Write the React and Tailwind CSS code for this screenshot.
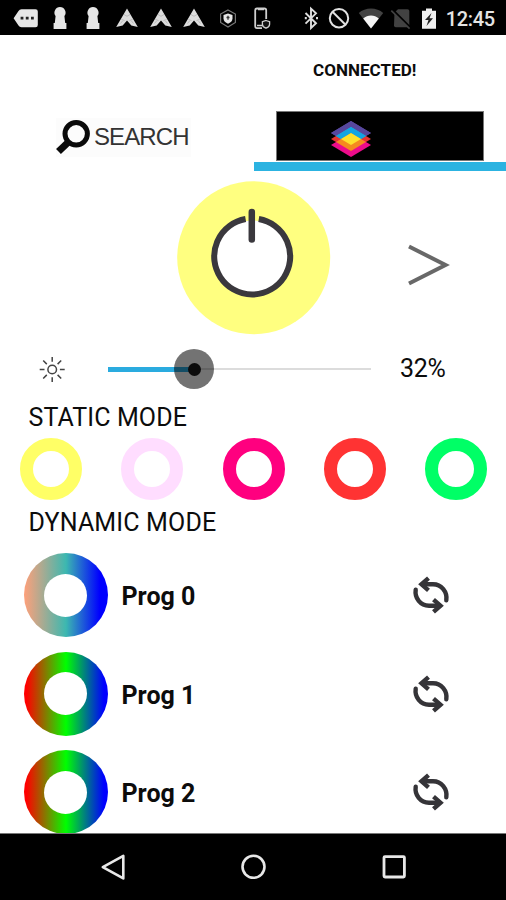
import React, { useState } from 'react';

const staticColors = [
  { id: 'yellow', ring: 'border-[#ffff66]' },
  { id: 'lilac', ring: 'border-[#ffddff]' },
  { id: 'pink', ring: 'border-[#ff007f]' },
  { id: 'red', ring: 'border-[#ff3333]' },
  { id: 'green', ring: 'border-[#00ff66]' },
];

const programs = [
  { name: 'Prog 0', gradient: 'bg-[linear-gradient(to_right,#ffa07a_0%,#3cb8b0_50%,#0000ff_90%)]' },
  { name: 'Prog 1', gradient: 'bg-[linear-gradient(to_right,#ff0000_3%,#00ff00_50%,#0000ff_95%)]' },
  { name: 'Prog 2', gradient: 'bg-[linear-gradient(to_right,#ff0000_3%,#00ff00_50%,#0000ff_95%)]' },
];

const Slot = ({ width, children }) => (
  <div className={`flex shrink-0 justify-center ${width}`}>
    <svg className="h-6 w-6 overflow-visible" viewBox="0 0 24 24" fill="none">
      {children}
    </svg>
  </div>
);

const Keyhole = () => (
  <Slot width="w-[33.6px]">
    <path d="M12 1a5.6 5.6 0 0 0-4.4 9L6.8 17H5.6v6h12.8v-6h-1.2l-.8-7A5.6 5.6 0 0 0 12 1z" fill="#e6e6e6" />
  </Slot>
);

const Tent = () => (
  <Slot width="w-[33.6px]">
    <path d="M12 2.500l10.800 18.500-6.500-1.500-4.300-5-4.300 5-6.500 1.500z" fill="#dcdcdc" />
    <path d="M9 8.500l3 1.800 3-1.800M6.500 13.500l3 1M17.500 13.500l-3 1M5.500 17.500l2-2.500M18.500 17.500l-2-2.500" stroke="#b0b0b0" strokeWidth="0.8" />
  </Slot>
);

const StatusBar = () => (
  <div className="flex h-[35px] shrink-0 items-center bg-black pl-[9.4px]">
    <Slot width="w-[33.6px]">
      <path d="M-.4 12.3L4.5 5q1-1.7 3-1.7H21.500q2.300 0 2.300 2.300v13.300q0 2.300-2.300 2.300H7.500q-2 0-3-1.700z" fill="#e6e6e6" />
      <path d="M6.600 10.800h2.800v2.800H6.600zM11.800 10.800h2.800v2.800h-2.800zM17 10.800h2.800v2.800H17z" fill="#222" />
    </Slot>
    <Keyhole />
    <Keyhole />
    <Tent />
    <Tent />
    <Tent />
    <Slot width="w-[33.6px]">
      <path d="M12 4l7.400 4v8.500L12 21l-7.400-4.500V8z" stroke="#777" strokeWidth="1.200" />
      <path d="M12 7.500l4.500 1.500v3.500c0 2.500-2 4.200-4.500 5.200-2.500-1-4.500-2.700-4.500-5.200V9z" fill="#e6e6e6" />
      <path d="M12 9.800v4M10.500 11.500h3" stroke="#333" strokeWidth="1.300" />
    </Slot>
    <Slot width="w-[33.6px]">
      <path d="M17.200 13V4.300q0-1.800-1.800-1.800H8q-1.800 0-1.800 1.800v16q0 1.800 1.800 1.800h5" stroke="#cfcfcf" strokeWidth="1.800" />
      <path d="M8 19.500h6M9 3.500h6" stroke="#cfcfcf" strokeWidth="1.500" />
      <path d="M17 14.500l3.600 1.200v2.500c0 2-1.600 3.200-3.600 4-2-.8-3.600-2-3.600-4v-2.500z" fill="#111" stroke="#cfcfcf" strokeWidth="1.300" />
    </Slot>
    <div className="w-[20px]" />
    <Slot width="w-[26px]">
      <path d="M6.500 7l10.500 10.300-5 4.700V2.600l5 4.700L6.500 17.700" stroke="#dedede" strokeWidth="1.900" />
      <path d="M5.800 11h2v2.300h-2zM17 11h2v2.300h-2z" fill="#dedede" />
    </Slot>
    <Slot width="w-[29px]">
      <circle cx="12" cy="12.300" r="9.200" stroke="#e2e2e2" strokeWidth="2" />
      <path d="M5.500 5.800l13 13" stroke="#e2e2e2" strokeWidth="2" />
    </Slot>
    <Slot width="w-[35px]">
      <path d="M12 22.500L-.2 7C6 1 18 1 24.200 7z" fill="#424242" />
      <path d="M12 22.500L4.200 12.500c4.300-4 11.300-4 15.600 0z" fill="#f5f5f5" />
    </Slot>
    <Slot width="w-[26px]">
      <path d="M5.500 6.500L9 3.200h9.500q1.800 0 1.800 1.800v16.200H6.800q-1.800 0-1.800-1.800z" fill="#424242" />
      <path d="M3.300 3.600l18 18" stroke="#000" strokeWidth="2.400" />
      <path d="M2.300 4.600l18.300 18" stroke="#424242" strokeWidth="1.600" />
    </Slot>
    <Slot width="w-[30px]">
      <path d="M9 2.500h6v2.200h4v18H5v-18h4z" fill="#f0f0f0" />
      <path d="M14.500 7L8 14h3.500l-2 6 6.500-7.800h-3.500z" fill="#222" />
    </Slot>
    <span className="ml-[1.500px] mt-[3px] text-[20px] leading-6 font-medium tracking-[-0.3px] text-[#e4e4e4]">12:45</span>
  </div>
);

const LayersLogo = () => (
  <svg className="h-[38px] w-[42px]" viewBox="0 0 42 38">
    <path d="M21 1l20 12-20 12L1 13z" fill="#57479d" />
    <path d="M21 7l20 12-20 12L1 19z" fill="#e5342f" />
    <path d="M21 13l20 12-20 12L1 25z" fill="#ec0c8b" />
    <path d="M21 1l20 12-5 3L21 7 6 16l-5-3z" fill="#57479d" />
    <path d="M21 7l15 9-15 9-15-9z" fill="#12a5e2" />
    <path d="M21 13l15 9-15 9-15-9z" fill="#f58a1f" />
    <path d="M11 19l-5-3 15-9 15 9-5 3-10-6z" fill="#12a5e2" />
    <path d="M21 13l10 6-10 6-10-6z" fill="#fde22c" />
  </svg>
);

const PowerIcon = () => (
  <svg className="h-[154px] w-[154px]" viewBox="0 0 154 154" fill="none">
    <circle cx="76.700" cy="76.700" r="76.500" fill="#ffff80" />
    <circle cx="75.200" cy="75.400" r="36" fill="#fff" />
    <path d="M68.600 38A38 38 0 1 0 81.800 38" stroke="#3a383d" strokeWidth="6" />
    <path d="M74.800 31v27.500" stroke="#3a383d" strokeWidth="6.500" strokeLinecap="round" />
  </svg>
);

const SunIcon = () => (
  <svg className="h-7 w-7" viewBox="0 0 28 28" fill="none" stroke="#444" strokeWidth="1.500">
    <circle cx="14.200" cy="14.500" r="4.300" />
    <path d="M14.200 2v4.800M14.200 22.200V27M1.700 14.500h4.800M21.900 14.500h4.800M5.200 5.500l3.600 3.600M19.600 19.900l3.600 3.600M5.200 23.500l3.600-3.600M19.600 9.100l3.600-3.600" />
  </svg>
);

const SyncIcon = () => (
  <svg className="h-10 w-10" viewBox="0 0 40 40" fill="none" stroke="#353438" strokeWidth="4.400">
    {['rotate(0 20 20)', 'rotate(180 20 20)'].map((turn) => (
      <g key={turn} transform={turn}>
        <path d="M17.500 3.200L10.500 9.300l7 6.100" />
        <path d="M11.500 9.300h10.500c8.500 0 14.500 7.700 13.300 16" strokeLinecap="round" />
      </g>
    ))}
  </svg>
);

const NavBar = () => (
  <div className="flex h-[67px] shrink-0 items-center justify-between border-t border-[#777] bg-black px-[99px]">
    <svg className="h-7 w-7" viewBox="0 0 28 28" fill="none">
      <path d="M24.300 2.800v22.600L3.800 14.100z" stroke="#e8e8e8" strokeWidth="2.600" strokeLinejoin="round" />
    </svg>
    <svg className="h-7 w-7" viewBox="0 0 28 28" fill="none">
      <circle cx="14.500" cy="13.800" r="11" stroke="#e8e8e8" strokeWidth="2.600" />
    </svg>
    <svg className="h-7 w-7" viewBox="0 0 28 28" fill="none">
      <rect x="5" y="3.600" width="20.400" height="20.400" rx="1" stroke="#e8e8e8" strokeWidth="2.800" />
    </svg>
  </div>
);

const App = () => {
  const [brightness, setBrightness] = useState(32);

  return (
    <div className="flex h-[900px] w-[506px] flex-col overflow-hidden bg-white font-['Roboto',sans-serif] text-[#0c0c0c]">
      <StatusBar />

      {/* Connection state */}
      <div className="flex h-[76px] shrink-0 justify-end pt-[25px] pr-[89.500px]">
        <p className="text-[17px] leading-5 font-bold tracking-[0.05px]">CONNECTED!</p>
      </div>

      {/* Tabs */}
      <div className="flex h-[60px] shrink-0">
        <div className="w-[254px] pt-[7px] pl-[56px]">
          <button className="flex h-[39px] w-[135px] items-center bg-[#fcfcfc]">
            <svg className="h-[39px] w-[38px]" viewBox="0 0 38 39" fill="none" stroke="#0a0a0a">
              <circle cx="20.200" cy="15.800" r="11.200" strokeWidth="5" />
              <path d="M12.500 24L2.500 33.500" strokeWidth="7" />
            </svg>
            <span className="pb-[2px] font-['Liberation_Sans',sans-serif] text-[24px] leading-8 tracking-[-0.9px] text-[#333]">SEARCH</span>
          </button>
        </div>
        <div className="flex flex-1 flex-col items-center border-b-[9px] border-[#2cb3e1]">
          <div className="flex h-[50px] w-[208px] items-center border border-[#777] bg-black pl-[53px] pt-[6px]">
            <LayersLogo />
          </div>
        </div>
      </div>

      {/* Power */}
      <div className="flex h-[171px] shrink-0 pt-[10px] pl-[177px]">
        <PowerIcon />
        <svg className="mt-[62px] ml-[75px] h-[44px] w-[46px]" viewBox="0 0 46 44" fill="none">
          <path d="M3 3.500L39.500 22 3 40.500" stroke="#686868" strokeWidth="4" />
        </svg>
      </div>

      {/* Brightness */}
      <div className="flex h-[54px] shrink-0 items-center pl-[38px]">
        <SunIcon />
        <div className="relative ml-[41.500px] flex h-10 w-[263px] items-center">
          <div className="h-[2px] w-full bg-[#dcdcdc]" />
          <div className="absolute left-0 h-[5px] bg-[#2aabdf]" style={{ width: `${brightness + 1}%` }} />
          <div
            className="absolute flex h-10 w-10 -translate-x-1/2 items-center justify-center rounded-full bg-black/55"
            style={{ left: `${brightness + 1}%` }}
          >
            <div className="h-[13px] w-[13px] rounded-full bg-[#0c0c0c]" />
          </div>
          <input
            type="range"
            value={brightness}
            onChange={(e) => setBrightness(Number(e.target.value))}
            className="absolute inset-0 w-full cursor-pointer opacity-0"
          />
        </div>
        <span className="ml-[29.500px] text-[25px] leading-8 tracking-[-0.3px]">{brightness}%</span>
      </div>

      {/* Static mode */}
      <h2 className="h-[42px] shrink-0 pt-[6px] pl-[28.500px] text-[25px] leading-8 tracking-[0.1px]">STATIC MODE</h2>
      <div className="flex h-[62px] shrink-0 justify-between pl-[20px] pr-[19px]">
        {staticColors.map((color) => (
          <button key={color.id} className={`h-[62px] w-[62px] rounded-full border-[13px] ${color.ring}`} />
        ))}
      </div>

      {/* Dynamic mode */}
      <h2 className="h-[46px] shrink-0 pt-[7px] pl-[28.500px] text-[25px] leading-8 tracking-[0.15px]">DYNAMIC MODE</h2>
      <div className="min-h-0 flex-1 overflow-hidden">
        {programs.map((program) => (
          <div key={program.name} className="flex h-[98.500px] items-center pl-[23.500px]">
            <div className={`flex h-[84px] w-[84px] items-center justify-center rounded-full ${program.gradient}`}>
              <div className="h-[43px] w-[43px] rounded-full bg-white" />
            </div>
            <span className="ml-[14px] w-[289px] pt-[4px] text-[25px] leading-8 font-bold">{program.name}</span>
            <SyncIcon />
          </div>
        ))}
      </div>

      <NavBar />
    </div>
  );
};

export default App;
